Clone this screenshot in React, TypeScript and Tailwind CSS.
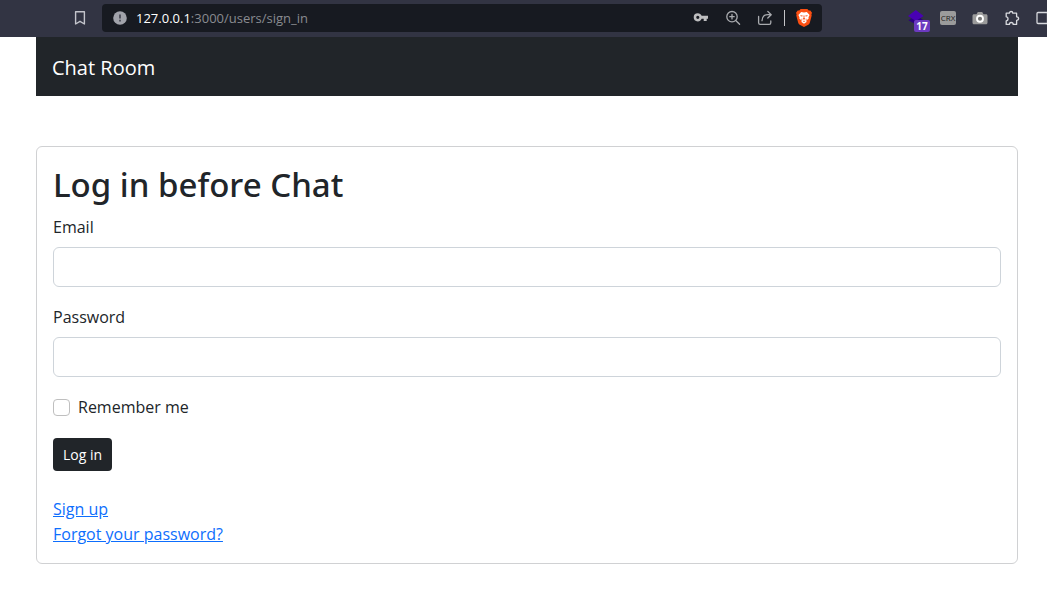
import type { InputHTMLAttributes } from 'react';

const iconButton = 'flex size-4 shrink-0 items-center justify-center';

function BookmarkIcon() {
  return (
    <svg width="16" height="16" viewBox="0 0 16 16" fill="none" stroke="#c3c4cb" strokeWidth="1.4" strokeLinejoin="round">
      <path d="M3.6 1.7h8.800v12.300L8 11.300l-4.400 2.700z" />
    </svg>
  );
}

function InfoIcon() {
  return (
    <svg width="14" height="14" viewBox="0 0 14 14" className="shrink-0">
      <circle cx="7" cy="7" r="6.8" fill="#a1a3ab" />
      <path d="M6.1 3.4h1.8v4.2H6.1zM6.1 8.8h1.8v1.8H6.1z" fill="#4a4c57" />
    </svg>
  );
}

function KeyIcon() {
  return (
    <svg width="16" height="16" viewBox="0 0 16 16">
      <path
        fill="#bdbdbf"
        fillRule="evenodd"
        d="M4.8 3.2c1.8 0 3.2 1.1 3.8 2.6H15v3h-1.3v2.300h-3V8.800H8.600C8 10.400 6.600 11.400 4.800 11.400a4.100 4.100 0 0 1 0-8.200zm0 2.500a1.600 1.600 0 1 0 0 3.200 1.600 1.600 0 0 0 0-3.200z"
      />
    </svg>
  );
}

function ZoomIcon() {
  return (
    <svg width="16" height="16" viewBox="0 0 16 16" fill="none" stroke="#a9abaf" strokeWidth="1.3" strokeLinecap="round">
      <circle cx="7" cy="6.700" r="5.200" />
      <path d="M11 10.700l3.600 3.600M4.800 6.700h4.400M7 4.500v4.400" />
    </svg>
  );
}

function ShareIcon() {
  return (
    <svg width="16" height="16" viewBox="0 0 16 16" fill="none" stroke="#a9abaf" strokeWidth="1.3" strokeLinecap="round" strokeLinejoin="round">
      <path d="M1.600 6.500v6.200c0 1 .6 1.600 1.600 1.600h9c1 0 1.600-.6 1.600-1.600V11" />
      <path d="M5 10.700c.2-3.800 2.200-6 6-6h2.800M10.800 1.400L14.200 4.700l-3.400 3.300" />
    </svg>
  );
}

function BraveIcon() {
  return (
    <svg width="16" height="18" viewBox="0 0 16 18">
      <path fill="#fb4f12" d="M4.600 0h6.800l1.300 1.500 1.600-.1L16 3.800l-.6 1.600.3 1.200-1.900 7.100c-.3.900-.8 1.500-1.500 2L8 18l-4.300-2.300c-.7-.5-1.200-1.100-1.500-2L.3 6.600l.3-1.200L0 3.800l1.700-2.400 1.600.1z" />
      <path fill="#fff" d="M5.200 3.100L8 3.500l2.800-.4 2.800 3-1.100 2.200.2 1.300-2.300 2 .1 1.400L8 14.700 5.500 13l.1-1.400-2.300-2 .2-1.300-1.100-2.200z" />
      <path fill="#fb4f12" d="M4.200 6.300l2.500.3-.4 1-1.500-.3zM11.800 6.300l-2.500.3.4 1 1.500-.3zM7.500 6.500h1l-.1 2.500 1 .8L8 10.700l-1.400-.9 1-.8zM5.500 9.300l1 1.600-.9.500zM10.500 9.300l-1 1.600.9.500zM6.700 12.100L8 11.700l1.300.4-1.300.8z" />
    </svg>
  );
}

function LayersIcon() {
  return (
    <svg width="16" height="16" viewBox="0 0 16 16">
      <path fill="#2b0080" d="M.5 10.200L8 5l7.500 5.200L8 14.500z" />
      <path fill="#4800b4" d="M0 6L7.800 0l7.800 6L7.800 11z" />
    </svg>
  );
}

function CameraIcon() {
  return (
    <svg width="16" height="16" viewBox="0 0 16 16">
      <path fill="#9b9b9b" d="M2 4.200h2.500L5.800 2h4.400l1.300 2.200H14c.9 0 1.500.6 1.500 1.500v7c0 .9-.6 1.500-1.500 1.500H2c-.9 0-1.500-.6-1.500-1.500v-7c0-.9.600-1.500 1.500-1.500z" />
      <circle cx="8" cy="8.700" r="3" fill="#777" stroke="#fff" strokeWidth="1.900" />
    </svg>
  );
}

function PuzzleIcon() {
  return (
    <svg width="16" height="16" viewBox="0 0 16 16" fill="none" stroke="#d8d9de" strokeWidth="1.300" strokeLinejoin="round">
      <path d="M2.200 3.200h3.200c0-1 .7-1.700 1.700-1.700s1.700.7 1.700 1.700h3.800v3.600c1.200 0 2 .8 2 1.800s-.8 1.800-2 1.800v4H9.200c0-1.200-.8-1.900-1.900-1.900s-1.900.7-1.900 1.900H2.200v-3.600c1.100 0 1.800-.9 1.800-2s-.7-2-1.800-2z" />
    </svg>
  );
}

function SidebarIcon() {
  return (
    <svg width="16" height="16" viewBox="0 0 16 16" fill="none" stroke="#d8d9de" strokeWidth="1.300">
      <rect x="1" y="2.500" width="14" height="11" rx="1" />
      <path d="M11.500 2.500v11" />
    </svg>
  );
}

function BrowserBar() {
  return (
    <div className="flex h-[37px] items-start overflow-hidden bg-[#323443] pt-1 pl-18">
      <div className="flex h-7 items-center">
        <button aria-label="Bookmark" className={iconButton}><BookmarkIcon /></button>
      </div>
      <div className="mr-[86px] ml-3.5 flex h-7 min-w-0 flex-1 items-center rounded-sm bg-[#171a21] pr-2.5 pl-[11px]">
        <InfoIcon />
        <span className="ml-[9px] flex-1 truncate font-['Open_Sans','Noto_Sans',sans-serif] text-[13px] leading-5 text-[#898b90]">
          <span className="text-white">127.0.0.1</span>:3000/users/sign_in
        </span>
        <div className="flex items-center gap-4">
          <button aria-label="Saved passwords" className={iconButton}><KeyIcon /></button>
          <button aria-label="Zoom" className={iconButton}><ZoomIcon /></button>
          <button aria-label="Share" className={iconButton}><ShareIcon /></button>
        </div>
        <div className="mr-[11px] ml-[11px] h-4 w-px bg-[#c4c5c8]" />
        <button aria-label="Brave Shields" className="flex shrink-0 items-center"><BraveIcon /></button>
      </div>
      <div className="-mr-[5px] flex h-7 items-center gap-4">
        <button aria-label="Layers extension" className="relative size-4 shrink-0">
          <LayersIcon />
          <span className="absolute top-[10px] left-1.5 flex h-3 w-4 items-center justify-center rounded-xs bg-[#6c3ac0] font-['Open_Sans',sans-serif] text-[10px] leading-3 font-bold text-white">
            17
          </span>
        </button>
        <button aria-label="CRX extension" className="flex h-3.5 w-4 shrink-0 items-center justify-center rounded-xs bg-[#9b9b9b] font-['Open_Sans',sans-serif] text-[8px] leading-3 font-medium text-[#202020]">
          CRX
        </button>
        <button aria-label="Screenshot extension" className={iconButton}><CameraIcon /></button>
        <button aria-label="Extensions" className={iconButton}><PuzzleIcon /></button>
        <button aria-label="Sidebar" className={iconButton}><SidebarIcon /></button>
      </div>
    </div>
  );
}

function Field({ label, id, ...props }: { label: string; id: string } & InputHTMLAttributes<HTMLInputElement>) {
  return (
    <div className="mb-4">
      <label htmlFor={id} className="mb-1.5 block leading-7">{label}</label>
      <input id={id} className="block h-10 w-full rounded-md border border-[#ced4da] bg-white px-3" {...props} />
    </div>
  );
}

export default function App() {
  return (
    <div className="min-h-screen bg-white font-['Open_Sans','Noto_Sans',sans-serif] text-base text-[#212529]">
      <BrowserBar />
      <div className="pr-[29px] pb-7 pl-9">
        <nav className="flex h-[59px] items-center bg-[#212529] px-4 pt-0.5">
          <a href="#" className="text-xl text-white">Chat Room</a>
        </nav>
        <main className="mt-[50px] rounded-md border border-[#d0d1d3] p-4">
          <form onSubmit={(event) => event.preventDefault()}>
            <h1 className="mb-1.5 font-['Noto_Sans','Open_Sans',sans-serif] text-[33px] leading-11 font-medium">Log in before Chat</h1>
            <Field label="Email" id="email" type="email" />
            <Field label="Password" id="password" type="password" />
            <div className="mb-[17px] flex items-center gap-2 leading-7">
              <input id="remember" type="checkbox" className="size-[17px] appearance-none rounded-sm border border-[#bfbfbf] bg-white checked:bg-[#0d6efd]" />
              <label htmlFor="remember">Remember me</label>
            </div>
            <button type="submit" className="h-[33px] rounded-sm bg-[#212529] px-2.5 text-sm text-white">Log in</button>
          </form>
          <div className="mt-[26px] flex flex-col items-start leading-[25px] text-[#0d6efd]">
            <a href="#" className="underline">Sign up</a>
            <a href="#" className="underline">Forgot your password?</a>
          </div>
        </main>
      </div>
    </div>
  );
}
